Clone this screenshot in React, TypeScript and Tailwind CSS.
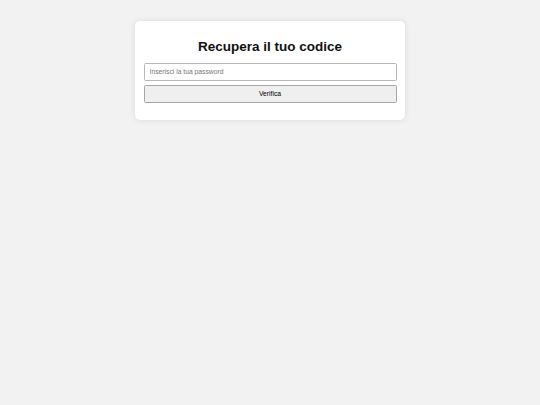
import { useState } from "react";

/**
 * codice recovery card
 */
export default function App() {
  const [password, setPassword] = useState("");

  return (
    <div className="min-h-[405px] w-full bg-[#f2f2f2] pt-[21px] font-['Liberation_Sans',Arial,sans-serif]">
      <div className="mx-auto w-[270px] rounded-[5px] bg-white px-[8.5px] pt-[17px] pb-[17px] shadow-[0_0_6px_rgba(0,0,0,0.1)]">
        {/* titolo */}
        <h2 className="mb-[8px] text-center text-[13.5px] leading-[17px] font-bold text-[#111]">
          Recupera il tuo codice
        </h2>

        {/* campo password */}
        <input
          type="password"
          value={password}
          onChange={(e) => setPassword(e.target.value)}
          placeholder="Inserisci la tua password"
          className="block h-[17.5px] w-full rounded-[1.5px] border border-[#b8b8b8] bg-white px-[5px] text-[6.75px] text-black outline-none placeholder:text-[#777]"
        />

        {/* pulsante */}
        <button
          type="button"
          className="mt-[4.5px] block h-[17.5px] w-full rounded-[1.5px] border border-[#a6a6a6] bg-[#efefef] text-center text-[6.75px] text-black"
        >
          Verifica
        </button>
      </div>
    </div>
  );
}
